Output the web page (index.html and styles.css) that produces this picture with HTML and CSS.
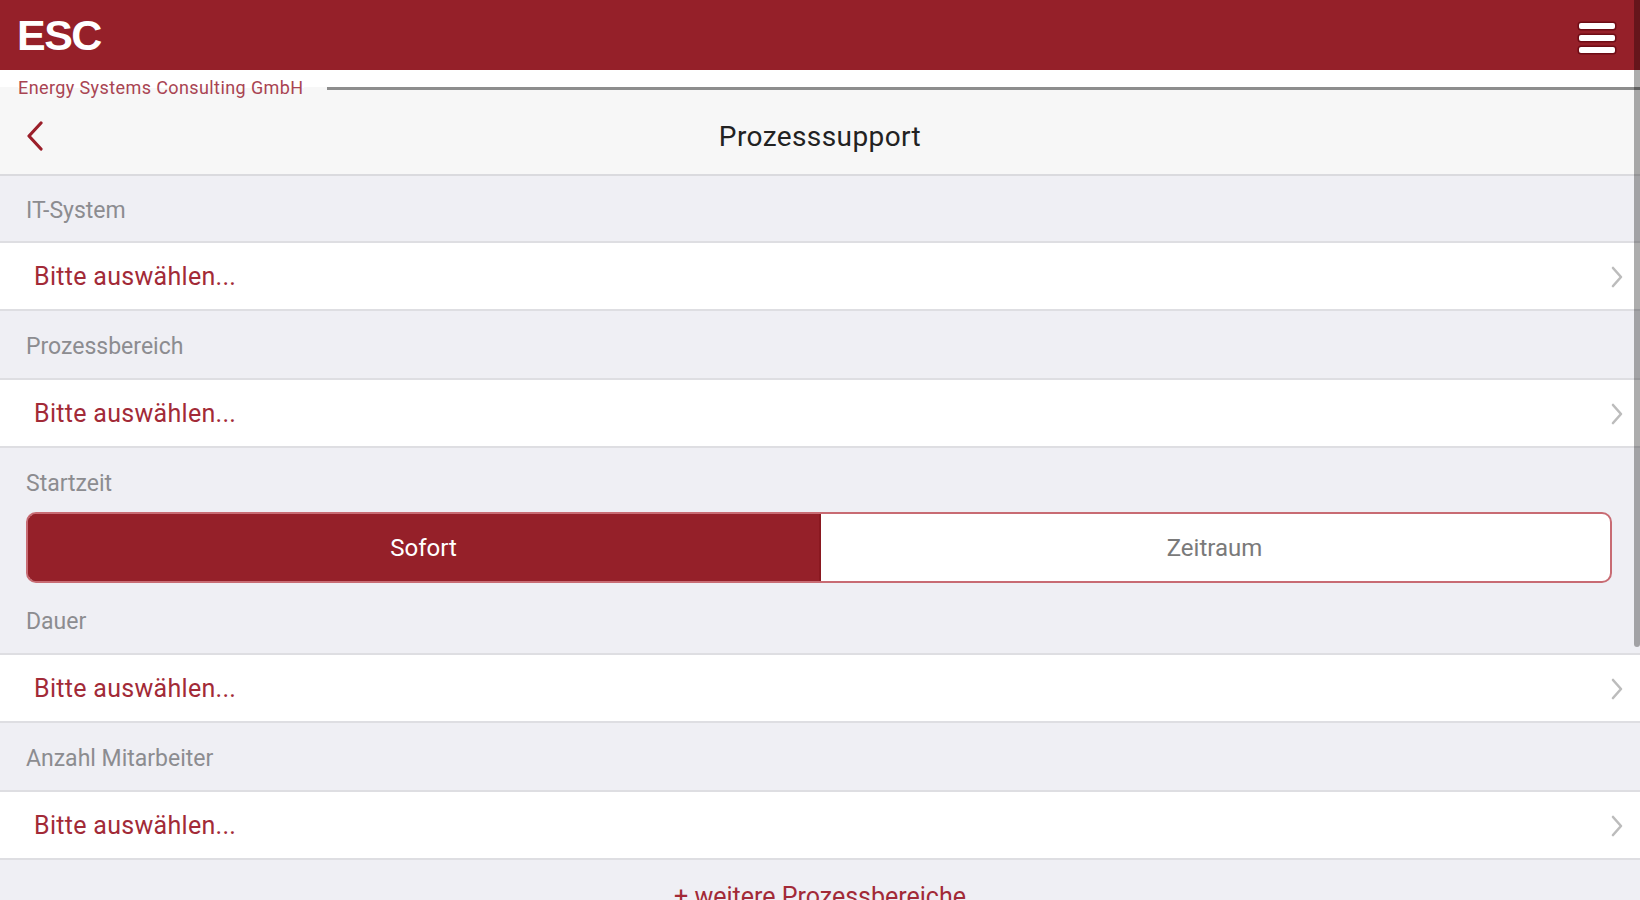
FILE: index.html
```html
<!DOCTYPE html>
<html lang="de">
<head>
<meta charset="utf-8">
<title>Prozesssupport</title>
<link rel="stylesheet" href="styles.css">
</head>
<body>
<div class="app">
  <header class="header">
    <div class="logo">ESC</div>
    <div class="menu"><span></span><span></span><span></span></div>
  </header>
  <div class="brand">
    <span class="brand-name">Energy Systems Consulting GmbH</span>
    <span class="brand-line"></span>
  </div>
  <nav class="nav">
    <div class="nav-left">
      <svg class="back" width="20" height="30" viewBox="0 0 20 30"><polyline points="16,2 4,15 16,28" fill="none" stroke="#9b1f2a" stroke-width="3.2" stroke-linecap="round" stroke-linejoin="round"/></svg>
    </div>
    <div class="title">Prozesssupport</div>
    <div class="nav-right"></div>
  </nav>

  <div class="group-label">IT-System</div>
  <div class="row"><span class="value">Bitte auswählen...</span><svg class="chev" width="14" height="24" viewBox="0 0 14 24"><polyline points="3,3 11,12 3,21" fill="none" stroke="#bcbcbc" stroke-width="2.6" stroke-linecap="round" stroke-linejoin="round"/></svg></div>

  <div class="group-label">Prozessbereich</div>
  <div class="row"><span class="value">Bitte auswählen...</span><svg class="chev" width="14" height="24" viewBox="0 0 14 24"><polyline points="3,3 11,12 3,21" fill="none" stroke="#bcbcbc" stroke-width="2.6" stroke-linecap="round" stroke-linejoin="round"/></svg></div>

  <div class="group-label">Startzeit</div>
  <div class="segmented">
    <div class="seg seg-active">Sofort</div>
    <div class="seg">Zeitraum</div>
  </div>

  <div class="group-label">Dauer</div>
  <div class="row"><span class="value">Bitte auswählen...</span><svg class="chev" width="14" height="24" viewBox="0 0 14 24"><polyline points="3,3 11,12 3,21" fill="none" stroke="#bcbcbc" stroke-width="2.6" stroke-linecap="round" stroke-linejoin="round"/></svg></div>

  <div class="group-label">Anzahl Mitarbeiter</div>
  <div class="row"><span class="value">Bitte auswählen...</span><svg class="chev" width="14" height="24" viewBox="0 0 14 24"><polyline points="3,3 11,12 3,21" fill="none" stroke="#bcbcbc" stroke-width="2.6" stroke-linecap="round" stroke-linejoin="round"/></svg></div>

  <div class="more">+ weitere Prozessbereiche</div>

  <div class="scrollbar"></div>
</div>
</body>
</html>
```
FILE: styles.css
```css
* { box-sizing: border-box; }
html, body { margin: 0; padding: 0; }
body {
  background: #efeff4;
  font-family: Roboto, "Liberation Sans", sans-serif;
  overflow: hidden;
  height: 900px;
}
.app { position: relative; min-height: 900px; }

.header {
  height: 70px;
  background: #952029;
  display: flex;
  align-items: center;
  justify-content: space-between;
  padding: 0 25px 0 17px;
}
.logo {
  font-family: "Liberation Sans", Arial, sans-serif;
  font-weight: 700;
  font-size: 43px;
  color: #fff;
  letter-spacing: -1.5px;
  line-height: 1;
  padding-top: 1px;
}
.menu {
  display: flex;
  flex-direction: column;
  gap: 6px;
  margin-top: 6px;
}
.menu span {
  display: block;
  width: 36px;
  height: 6px;
  background: #fff;
  border-radius: 2px;
  box-shadow: 0 0 0 1.5px #6e0c15;
}

.brand {
  height: 36px;
  background: linear-gradient(#ffffff 0 17px, #f7f7f7 17px);
  display: flex;
  align-items: center;
  padding-left: 18px;
}
.brand-name {
  font-size: 18px;
  letter-spacing: 0.4px;
  color: #a94452;
  line-height: 1;
  background: linear-gradient(#ffffff 0 50%, #f7f7f7 50%);
}
.brand-line {
  flex: 1;
  height: 3px;
  margin-left: 23px;
  background: #8d8d8d;
}

.nav {
  height: 70px;
  background: #f7f7f7;
  border-bottom: 2px solid #dadade;
  display: grid;
  grid-template-columns: 1fr auto 1fr;
  align-items: center;
  padding-bottom: 8px;
}
.nav-left { padding-left: 25px; display: flex; align-items: center; }
.title {
  font-size: 28px;
  color: #222;
  letter-spacing: 0.4px;
}

.group-label {
  height: 67px;
  padding: 4px 0 0 26px;
  display: flex;
  align-items: center;
  font-size: 23px;
  color: #8c8c90;
}
.nav + .group-label { height: 65px; }

.row {
  height: 70px;
  background: #fff;
  border-top: 2px solid #dedee2;
  border-bottom: 2px solid #dedee2;
  display: flex;
  align-items: center;
  justify-content: space-between;
  padding: 1px 16px 0 34px;
}
.value {
  font-size: 25px;
  color: #a22a37;
  letter-spacing: 0.3px;
}

.segmented {
  height: 71px;
  margin: -3px 28px 3px 26px;
  display: flex;
  border: 2px solid #c86b73;
  border-radius: 10px;
  overflow: hidden;
  background: #fff;
}
.seg {
  flex: 1;
  display: flex;
  align-items: center;
  justify-content: center;
  font-size: 24px;
  color: #7a7a7a;
}
.seg-active {
  background: #952029;
  color: #fff;
  box-shadow: 0 0 0 2px #8a1820;
}

.more {
  text-align: center;
  font-size: 25px;
  line-height: 30px;
  padding-top: 22px;
  color: #a22a37;
}

.scrollbar {
  position: absolute;
  top: 0;
  right: 0;
  width: 6px;
  height: 647px;
  border-radius: 0 0 3px 3px;
  background: rgba(0, 0, 0, 0.32);
}
```
